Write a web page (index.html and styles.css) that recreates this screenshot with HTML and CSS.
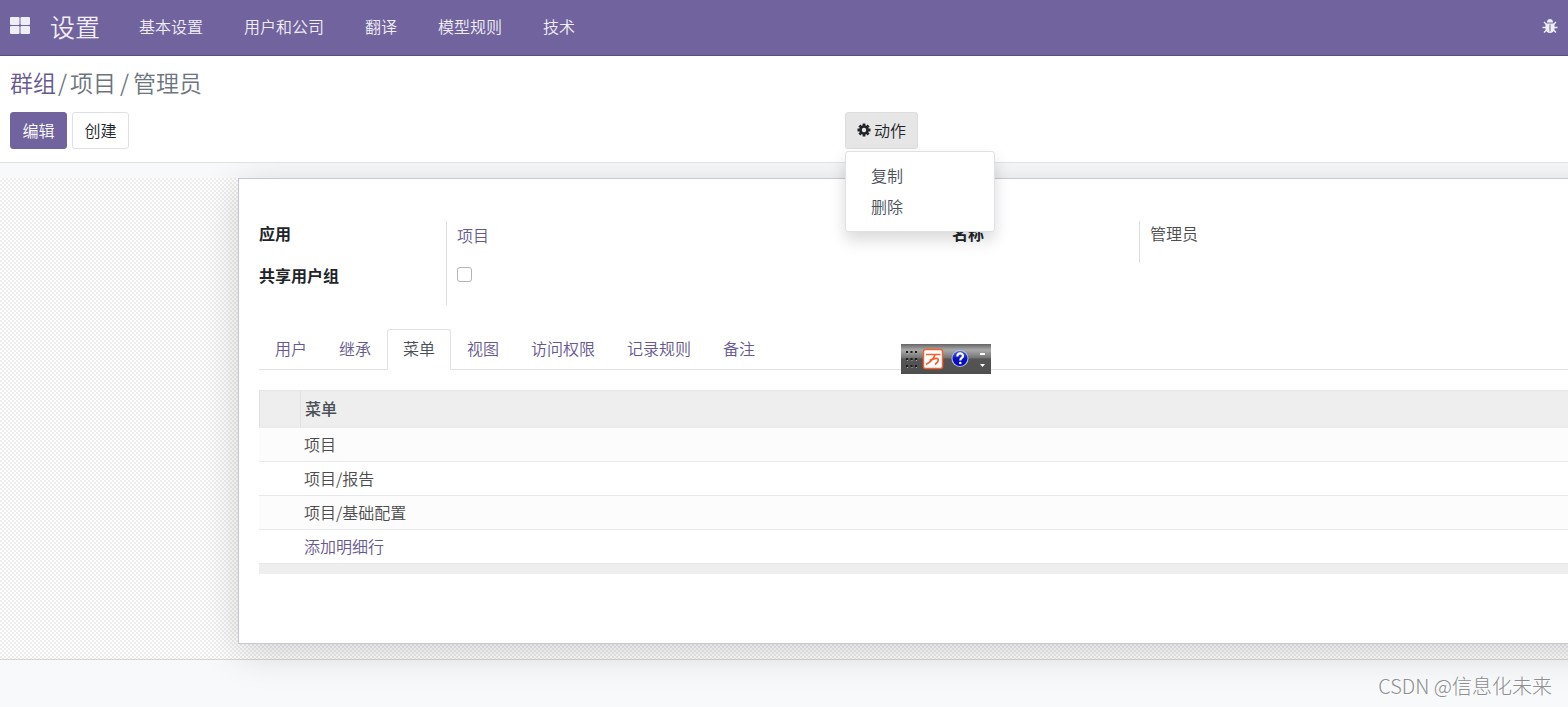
FILE: index.html
```html
<!DOCTYPE html>
<html lang="zh-CN">
<head>
<meta charset="utf-8">
<meta name="viewport" content="width=device-width, initial-scale=1">
<title>设置</title>
<link rel="stylesheet" href="styles.css">
</head>
<body>
<header class="navbar">
  <button class="icon-button" type="button" aria-label="应用">
    <svg width="20" height="17" viewBox="0 0 20 17" fill="currentColor"><rect width="9.500" height="8" rx="1.200"/><rect x="10.500" width="9.500" height="8" rx="1.200"/><rect y="9" width="9.500" height="8" rx="1.200"/><rect x="10.500" y="9" width="9.500" height="8" rx="1.200"/></svg>
  </button>
  <a class="brand" href="#">设置</a>
  <nav class="menu">
    <a href="#">基本设置</a>
    <a href="#">用户和公司</a>
    <a href="#">翻译</a>
    <a href="#">模型规则</a>
    <a href="#">技术</a>
  </nav>
  <button class="icon-button debug" type="button" aria-label="调试">
    <svg width="16" height="16" viewBox="0 0 16 16"><path d="M5 4.500a3 3.500 0 0 1 6 0zM3.500 5.500h9v5.500a4.500 4 0 0 1-9 0z" fill="currentColor"/><path d="M4.500 6.500 2 4M11.500 6.500 14 4M4 9.500H.5M12 9.500h3.500M4.500 12 2 14.500M11.500 12l2.500 2.500" stroke="currentColor" stroke-width="1.400"/><path d="M8 6.500v7" stroke="#71639e" stroke-width="1"/></svg>
  </button>
</header>

<section class="control-panel">
  <nav class="breadcrumb"><a href="#">群组</a><span class="first-slash">/</span><span>项目</span><span class="slash">/</span><span>管理员</span></nav>
  <div class="actions">
    <div class="buttons">
      <button class="button primary" type="button">编辑</button>
      <button class="button" type="button">创建</button>
    </div>
    <div class="dropdown">
      <button class="button open" type="button" aria-expanded="true">
        <svg width="14" height="14" viewBox="0 0 14 14"><g stroke="currentColor" stroke-width="2.800"><path d="M7 .5v13M.5 7h13M2.400 2.400l9.200 9.200M11.600 2.400l-9.200 9.200"/></g><circle cx="7" cy="7" r="4.700" fill="currentColor"/><circle cx="7" cy="7" r="2.200" fill="#e6e6e6"/></svg>动作
      </button>
      <div class="dropdown-menu">
        <button type="button">复制</button>
        <button type="button">删除</button>
      </div>
    </div>
  </div>
</section>

<main class="form-view">
  <div class="canvas">
    <div class="sheet">
      <div class="groups">
        <div class="group">
          <span class="label">应用</span>
          <div class="value"><a class="record-link" href="#">项目</a></div>
          <label class="label" for="share">共享用户组</label>
          <div class="value"><input id="share" type="checkbox"></div>
        </div>
        <div class="group">
          <span class="label">名称</span>
          <div class="value">管理员</div>
        </div>
      </div>
      <nav class="tabs">
        <a href="#">用户</a>
        <a href="#">继承</a>
        <a class="active" href="#">菜单</a>
        <a href="#">视图</a>
        <a href="#">访问权限</a>
        <a href="#">记录规则</a>
        <a href="#">备注</a>
      </nav>
      <table class="list">
        <thead><tr><th class="handle"></th><th>菜单</th></tr></thead>
        <tbody>
          <tr><td></td><td>项目</td></tr>
          <tr><td></td><td>项目/报告</td></tr>
          <tr><td></td><td>项目/基础配置</td></tr>
          <tr><td></td><td><a href="#">添加明细行</a></td></tr>
        </tbody>
        <tfoot><tr><td colspan="2"></td></tr></tfoot>
      </table>
    </div>
  </div>
</main>

<div class="ime">
  <svg width="90" height="30" viewBox="0 0 90 30">
    <defs><linearGradient id="ball" x1="0" y1="0" x2="0" y2="1"><stop offset="0" stop-color="#4b63e8"/><stop offset=".5" stop-color="#0a12c0"/><stop offset="1" stop-color="#0505c8"/></linearGradient></defs>
    <g stroke="#1c1c1c" stroke-width="2" stroke-dasharray="2 2.500"><path d="M5 8h11M5 15h11M5 22h11"/></g>
    <g stroke="#aaa" stroke-dasharray="1 3.500"><path d="M6 9.500h10M6 16.500h10M6 23.500h10"/></g>
    <rect x="22.500" y="5.500" width="19" height="19" rx="2" fill="#fff" stroke="#f4602e" stroke-width="1.500"/>
    <path d="M25 10.500h14.500M34 11c-1.500 4-4.500 7-9 9.500M28.500 16.500c3-1.500 8-3 8.500-1.500s-1 4-3 5.500" fill="none" stroke="#f4602e" stroke-width="1.700"/>
    <circle cx="59" cy="14.500" r="8.500" fill="#b9c0d0"/><circle cx="59" cy="14.500" r="7.500" fill="url(#ball)"/>
    <path d="M56.300 12.500c0-4 5.700-4 5.700-.5 0 2-2.700 2-2.700 4.500" fill="none" stroke="#fff" stroke-width="2.200"/><circle cx="59.300" cy="19" r="1.300" fill="#fff"/>
    <path d="M79 9h5v2h-5zM79 20h5l-2.500 3z" fill="#fff"/>
  </svg>
</div>
<div class="watermark">CSDN @信息化未来</div>
</body>
</html>
```
FILE: styles.css
```css
* { box-sizing: border-box; }

body {
  position: relative;
  display: flex;
  flex-direction: column;
  min-height: 100vh;
  margin: 0;
  overflow-x: hidden;
  background: #f8f9fb;
  color: #4c4c4c;
  font: 350 16px/24px "Noto Sans CJK SC", sans-serif;
}

a { color: #66598f; text-decoration: none; }
button { font: inherit; cursor: pointer; }

.navbar {
  display: flex;
  align-items: center;
  height: 56px;
  padding: 0 10px 4px;
  border-bottom: 1px solid #5a4f7f;
  background: #71639e;
  color: #f0eef5;
}
.navbar a { color: inherit; }
.icon-button {
  display: flex;
  padding: 0;
  border: 0;
  background: none;
  color: inherit;
}
.debug { margin-left: auto; }
.brand { margin: 0 39px 0 20px; font-size: 25px; line-height: 40px; }
.menu { display: flex; gap: 41px; }

.control-panel {
  padding: 12px 10px 13px;
  border-bottom: 1px solid #dee2e6;
  background: #fff;
}
.breadcrumb {
  display: flex;
  margin-bottom: 16px;
  color: #6c757d;
  font-size: 23px;
  line-height: 28px;
}
.first-slash { margin: 0 3px 0 2px; }
.slash { margin: 0 4px; }
.actions { display: grid; grid-template-columns: 835fr 713fr; }
.buttons { display: flex; gap: 5px; }
.button {
  display: flex;
  align-items: center;
  justify-content: center;
  gap: 3px;
  min-width: 57px;
  height: 37px;
  padding: 0 11px 2px;
  border: 1px solid #dee2e6;
  border-radius: 3px;
  background: #fff;
  color: #212529;
}
.button.primary { border-color: #71639e; background: #71639e; color: #fff; }
.button.open { border-color: #dcdddf; background: #e6e6e6; }
.dropdown { position: relative; }
.dropdown-menu {
  position: absolute;
  top: 39px;
  left: 0;
  z-index: 5;
  display: flex;
  flex-direction: column;
  width: 150px;
  padding: 7px 0 10px;
  border: 1px solid #dee2e6;
  border-radius: 3px;
  background: #fff;
  box-shadow: 0 8px 16px rgba(0, 0, 0, .15);
}
.dropdown-menu button {
  height: 31px;
  padding: 0 25px;
  border: 0;
  background: none;
  color: #495057;
  text-align: left;
}

.form-view { padding: 15px 0 47px; overflow: hidden; }
.canvas {
  padding-bottom: 15px;
  border-bottom: 1px solid #d5d6d8;
  background: repeating-conic-gradient(#eee 0 25%, #fff 0 50%) 0 0 / 4px 4px;
}
.sheet {
  margin: 0 -98px 0 238px;
  padding: 42px 20px 69px;
  border: 1px solid #c8c8d3;
  background: #fff;
  box-shadow: 0 8px 36px rgba(0, 0, 0, .17);
}
.groups { display: grid; grid-template-columns: 1fr 1fr; align-items: start; }
.group { display: grid; grid-template-columns: 187px 1fr; }
.label { color: #212529; font-weight: 700; }
.value { height: 42px; padding-left: 10px; border-left: 1px solid #ddd; }
.record-link { display: block; padding-top: 2px; }
.value input {
  display: block;
  appearance: none;
  width: 15px;
  height: 15px;
  margin: 4px 0;
  border: 1px solid #adb5bd;
  border-radius: 3px;
  background: #fff;
}

.tabs {
  display: flex;
  margin: 24px 0 20px;
  border-bottom: 1px solid #dee2e6;
}
.tabs a {
  margin-bottom: -1px;
  padding: 6px 15px 9px;
  border: 1px solid transparent;
  border-radius: 3px 3px 0 0;
}
.tabs .active {
  border-color: #dee2e6 #dee2e6 #fff;
  background: #fff;
  color: #495057;
}

.list { width: 100%; border-collapse: separate; border-spacing: 0; }
.list th, .list td { padding: 0 4px 2px; text-align: left; }
.list th {
  height: 38px;
  border-top: 1px solid #e5e5e5;
  border-bottom: 2px solid #e9ecef;
  border-left: 1px solid #dfe0e2;
  background: #eee;
  color: #495057;
  font-weight: 500;
}
.list .handle { width: 41px; }
.list tbody td { height: 34px; border-bottom: 1px solid #e6e8ea; }
.list tbody tr:nth-child(odd) { background: #fcfcfc; }
.list tfoot td { height: 10px; background: #eee; }

.ime {
  position: absolute;
  top: 344px;
  left: 901px;
  height: 30px;
  background: linear-gradient(#666, #aaa 20%, #777 45%, #555 50%, #4f4f4f);
}
.ime svg { display: block; }
.watermark {
  position: absolute;
  right: 16px;
  bottom: 6px;
  color: #8d8d8f;
  font-size: 20px;
  font-weight: 300;
  line-height: 30px;
  text-shadow: 1px 1px 1px #fff;
}
```
